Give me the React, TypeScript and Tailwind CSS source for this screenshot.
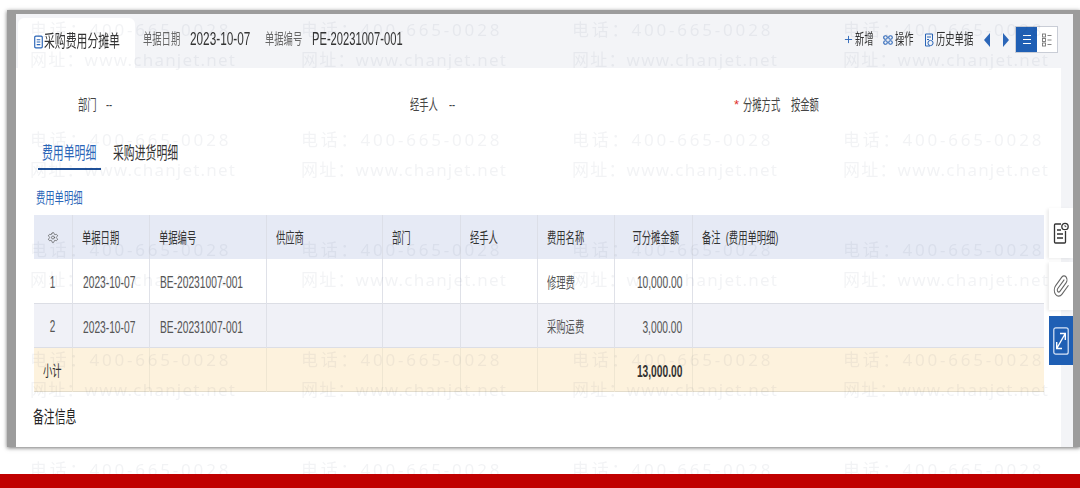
import React from "react";
import { Settings, Paperclip, Plus } from "lucide-react";

const cols = [
  "w-[38px]", "w-[77px]", "w-[117px]", "w-[116px]", "w-[78px]", "w-[77px]", "w-[77px]", "w-[78px]", "w-[352px]",
];

const cjk = "font-['Liberation_Sans','Noto_Sans_CJK_SC',sans-serif]";

// the shot is squeezed sideways, so text is scaled on x inside a box of the seen width
const Squeezed = ({ className = "", right = false, children }: { className?: string; right?: boolean; children: React.ReactNode }) => (
  <div className={`shrink-0 flex whitespace-nowrap ${right ? "justify-end" : ""} ${className}`}>
    <span className={`inline-block scale-x-[0.62] ${right ? "origin-right" : "origin-left"}`}>{children}</span>
  </div>
);

const Watermark = () => (
  <div className="absolute inset-0 pointer-events-none pl-[30px] pt-[15px] grid grid-cols-[repeat(4,271px)] auto-rows-[110px] font-['Noto_Sans','Noto_Sans_CJK_SC',sans-serif] text-[17px] leading-[30px] tracking-[2.8px] text-[rgba(40,50,80,0.06)] whitespace-nowrap">
    {Array.from({ length: 20 }).map((_, i) => (
      <div key={i}>
        <div>电话：400-665-0028</div>
        <div className="tracking-[1.2px]">网址：www.chanjet.net</div>
      </div>
    ))}
  </div>
);

const Head = ({ children, className = "" }: { children?: React.ReactNode; className?: string }) => (
  <th className={`border-r border-[#dcdfe8] p-0 pt-[3px] font-normal text-left last:border-r-0 ${className}`}>{children}</th>
);

const Cell = ({ children, className = "" }: { children?: React.ReactNode; className?: string }) => (
  <td className={`border-r border-[#dfe1e8] p-0 pt-[4px] last:border-r-0 ${className}`}>{children}</td>
);

const Row = ({ no, date, code, name, amount, className }: { no: string; date: string; code: string; name: string; amount: string; className: string }) => (
  <tr className={`h-[44px] border-b border-[#dcdee5] text-[#555] ${className}`}>
    <Cell>
      <div className="flex justify-center text-[16px] pr-[1px]">
        <span className="scale-x-[0.62]">{no}</span>
      </div>
    </Cell>
    <Cell><Squeezed className="pl-[10px] text-[16.5px]">{date}</Squeezed></Cell>
    <Cell><Squeezed className="pl-[10px] text-[16.5px]">{code}</Squeezed></Cell>
    <Cell />
    <Cell />
    <Cell />
    <Cell><Squeezed className="pl-[9px] text-[15px]">{name}</Squeezed></Cell>
    <Cell><Squeezed right className="pr-[9px] text-[16.5px]">{amount}</Squeezed></Cell>
    <Cell />
  </tr>
);

const App = () => {
  return (
    <div className={`relative w-[1080px] h-[488px] overflow-hidden bg-white flex flex-col ${cjk}`}>
      <div className="relative ml-[7px] mt-[10px] h-[437px] border-t-[4px] border-l-[9px] border-r-[7px] border-[#9c9c9c] bg-[#f3f4f7] shadow-[0_1px_4px_rgba(0,0,0,0.55)] flex flex-col blur-[0.35px]">
        {/* top bar */}
        <div className="h-[54px] shrink-0 flex items-start">
          <div className="ml-[2px] mt-[4px] h-[50px] w-[117px] bg-white rounded-t-[6px] flex items-center pl-[16px] pb-[3px]">
            <svg viewBox="0 0 10 16" className="w-[9px] h-[16px] text-[#2b66b8] shrink-0 mr-[1px]" fill="none" stroke="currentColor" strokeWidth="1.3">
              <rect x="0.8" y="1.5" width="8.4" height="13" rx="1.2" />
              <path d="M3 5.5h4M3 8h4M3 11h4" />
            </svg>
            <Squeezed className="w-[76px] text-[17.5px] text-[#333]">采购费用分摊单</Squeezed>
          </div>
          <div className="flex items-center h-[54px] pb-[3px] pl-[8px] text-[#333]">
            <Squeezed className="w-[47px] text-[15px] text-[#666]">单据日期</Squeezed>
            <Squeezed className="w-[75px] text-[19px]">2023-10-07</Squeezed>
            <Squeezed className="w-[47px] text-[15px] text-[#666]">单据编号</Squeezed>
            <Squeezed className="w-[95px] text-[18px]">PE-20231007-001</Squeezed>
          </div>
          <div className="ml-auto flex items-center h-[54px] pb-[3px] pr-[15px] text-[#333] text-[15px]">
            <Plus className="w-[11px] h-[11px] text-[#2b66b8] mr-[1px]" strokeWidth={2} />
            <Squeezed className="w-[28px]">新增</Squeezed>
            <svg viewBox="0 0 10 10" className="w-[10px] h-[10px] text-[#2b66b8] mr-[2px]" fill="none" stroke="currentColor" strokeWidth="1.1">
              <circle cx="2.5" cy="2.5" r="1.8" />
              <circle cx="7.5" cy="2.5" r="1.8" />
              <circle cx="2.5" cy="7.5" r="1.8" />
              <circle cx="7.5" cy="7.5" r="1.8" />
            </svg>
            <Squeezed className="w-[29px]">操作</Squeezed>
            <svg viewBox="0 0 10 14" className="w-[10px] h-[14px] text-[#2b66b8] mr-[2px]" fill="none" stroke="currentColor" strokeWidth="1">
              <path d="M6 13H1.5V1h7v6M3 4h4M3 6.5h2" />
              <circle cx="6.5" cy="10" r="2.6" />
            </svg>
            <Squeezed className="w-[48px]">历史单据</Squeezed>
            <svg viewBox="0 0 6 14" className="w-[6px] h-[14px] text-[#2b66b8]" fill="currentColor"><path d="M6 0v14L0 7z" /></svg>
            <svg viewBox="0 0 6 14" className="w-[6px] h-[14px] text-[#2b66b8] ml-[13px]" fill="currentColor"><path d="M0 0v14l6-7z" /></svg>
            <div className="ml-[6px] w-[43px] h-[27px] border border-[#c9cdd6] bg-white flex">
              <div className="w-[21px] bg-[#1f5fb4] flex flex-col items-center justify-center gap-[3px]">
                <span className="block w-[8px] h-px bg-white" />
                <span className="block w-[8px] h-px bg-white" />
                <span className="block w-[8px] h-px bg-white" />
              </div>
              <div className="flex-1 flex items-center justify-center">
                <svg viewBox="0 0 10 14" className="w-[10px] h-[14px] text-[#777]" fill="none" stroke="currentColor" strokeWidth="0.9">
                  <rect x="0.5" y="1" width="3" height="3" />
                  <rect x="0.5" y="5.5" width="3" height="3" />
                  <rect x="0.5" y="10" width="3" height="3" />
                  <path d="M5.5 2.5h4M5.5 7h4M5.5 11.5h4" />
                </svg>
              </div>
            </div>
          </div>
        </div>

        {/* body */}
        <div className="flex-1 mr-[12px] bg-white flex flex-col">
          <div className="mt-[26px] h-[22px] flex items-center pl-[62px] text-[15px] text-[#444]">
            <div className="w-[332px] flex items-center">
              <Squeezed className="w-[28px]">部门</Squeezed>
              <Squeezed>--</Squeezed>
            </div>
            <div className="w-[324px] flex items-center">
              <Squeezed className="w-[39px]">经手人</Squeezed>
              <Squeezed>--</Squeezed>
            </div>
            <span className="w-[9px] text-[13px] text-[#e0302a]">*</span>
            <Squeezed className="w-[48px]">分摊方式</Squeezed>
            <Squeezed>按金额</Squeezed>
          </div>

          <div className="mt-[24px] ml-[22px] flex items-start h-[30px] text-[17.5px] leading-[26px]">
            <div className="w-[63px] h-[30px] border-b-[2px] border-[#1f5199] pl-[4px] text-[#2b66b8]">
              <Squeezed>费用单明细</Squeezed>
            </div>
            <Squeezed className="ml-[12px] text-[#333]">采购进货明细</Squeezed>
          </div>

          <Squeezed className="mt-[19px] ml-[20px] h-[18px] text-[15px] leading-[18px] text-[#2b66b8]">费用单明细</Squeezed>

          <table className="mt-[8px] ml-[18px] w-[1010px] table-fixed border-collapse">
            <colgroup>
              {cols.map((c, i) => (
                <col key={i} className={c} />
              ))}
            </colgroup>
            <thead>
              <tr className="h-[44px] bg-[#e6eaf5] text-[15px] text-[#333]">
                <Head>
                  <div className="flex justify-center pl-[1px] pb-[3px]">
                    <Settings className="w-[12px] h-[13px] text-[#555]" strokeWidth={1.4} />
                  </div>
                </Head>
                <Head><Squeezed className="pl-[9px]">单据日期</Squeezed></Head>
                <Head><Squeezed className="pl-[9px]">单据编号</Squeezed></Head>
                <Head><Squeezed className="pl-[9px]">供应商</Squeezed></Head>
                <Head><Squeezed className="pl-[9px]">部门</Squeezed></Head>
                <Head><Squeezed className="pl-[9px]">经手人</Squeezed></Head>
                <Head><Squeezed className="pl-[9px]">费用名称</Squeezed></Head>
                <Head><Squeezed right className="pr-[12px]">可分摊金额</Squeezed></Head>
                <Head><Squeezed className="pl-[9px]">备注&nbsp;&nbsp;(费用单明细)</Squeezed></Head>
              </tr>
            </thead>
            <tbody>
              <Row no="1" date="2023-10-07" code="BE-20231007-001" name="修理费" amount="10,000.00" className="bg-white" />
              <Row no="2" date="2023-10-07" code="BE-20231007-001" name="采购运费" amount="3,000.00" className="bg-[#f0f1f7]" />
              <tr className="h-[44px] bg-[#fdf2dd] border-b border-[#e3dccb] text-[#333]">
                <Cell className="border-[#efe6d2]"><Squeezed className="pl-[9px] text-[15px]">小计</Squeezed></Cell>
                <Cell className="border-[#efe6d2]" />
                <Cell className="border-[#efe6d2]" />
                <Cell className="border-[#efe6d2]" />
                <Cell className="border-[#efe6d2]" />
                <Cell className="border-[#efe6d2]" />
                <Cell className="border-[#efe6d2]" />
                <Cell className="border-[#efe6d2]"><Squeezed right className="pr-[9px] text-[16.5px] font-bold">13,000.00</Squeezed></Cell>
                <Cell />
              </tr>
            </tbody>
          </table>

          <Squeezed className="mt-[13px] ml-[17px] text-[17.5px] leading-[24px] text-[#222]">备注信息</Squeezed>
        </div>

        {/* side buttons */}
        <div className="absolute right-0 top-[194px] w-[24px] flex flex-col">
          <div className="h-[50px] bg-white shadow-[-2px_1px_3px_rgba(0,0,0,0.08)] flex items-center justify-center">
            <svg viewBox="0 0 16 24" className="w-[16px] h-[24px] text-[#333]" fill="none" stroke="currentColor" strokeWidth="1.3">
              <path d="M8 3H2.5a1 1 0 0 0-1 1v17a1 1 0 0 0 1 1h9a1 1 0 0 0 1-1V10" />
              <path d="M4 9h4M4 13h6M4 17h6" />
              <circle cx="12" cy="5.5" r="3.2" />
              <path d="M12 4v1.6h1.3" strokeWidth="0.8" />
            </svg>
          </div>
          <div className="mt-[4px] h-[48px] bg-white shadow-[-2px_1px_3px_rgba(0,0,0,0.08)] flex items-center justify-center">
            <Paperclip className="w-[18px] h-[18px] scale-y-[1.35] text-[#666]" strokeWidth={1.3} />
          </div>
          <div className="mt-[6px] h-[49px] bg-[#1f5fb4] flex items-center justify-center">
            <svg viewBox="0 0 16 28" className="w-[16px] h-[28px] text-white" fill="none" stroke="currentColor" strokeWidth="1.2">
              <rect x="0.8" y="0.8" width="14.4" height="26.4" rx="2" className="text-[#dbe6f7]" />
              <path d="M4 21 12 7M7 6.5h5.3V13M3.7 15v6.5H9" strokeWidth="1.4" />
            </svg>
          </div>
        </div>
      </div>

      <Watermark />

      <div className="mt-auto relative h-[14px] shrink-0 bg-[#c00000]" />
    </div>
  );
};

export default App;
